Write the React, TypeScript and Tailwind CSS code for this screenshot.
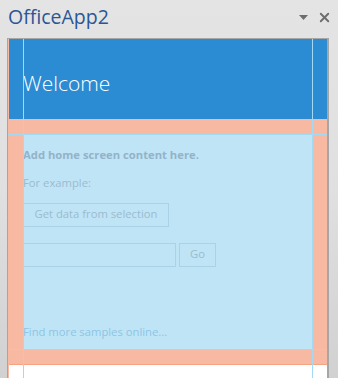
import { X } from "lucide-react";

// Office task pane, with the dev-tools box-model overlay drawn on top.
export default function App() {
  const guide = "absolute bg-[#a3d9f2]";
  return (
    <div className="relative h-[378px] w-[338px] overflow-hidden bg-gradient-to-b from-[#e4e4e4] via-[#e0e0e0] to-[#d1d1d1] font-['Open_Sans',sans-serif]">
      <div className="flex h-[38px] items-start justify-between pl-[8px] pr-[6px] pt-[3px]">
        <div className="text-[19.5px] leading-[28px] text-[#2b5597]">OfficeApp2</div>
        <div className="flex items-center gap-[9px] pt-[7px]">
          <svg width="9" height="5" viewBox="0 0 9 5">
            <path d="M0 0h9L4.5 5z" fill="#6d6d6d" />
          </svg>
          <X size={15} strokeWidth={3} className="text-[#6d6d6d]" />
        </div>
      </div>

      <div className="relative ml-[7px] h-[340px] w-[322px] border-l border-r-2 border-t border-[#a6a6a6] bg-[#f8b9a2] pl-px">
        <div className="flex h-[80px] items-center bg-[#2b8bd3] pl-[14px] pt-[10px]">
          <h1 className="text-[21px] font-light text-white">Welcome</h1>
        </div>

        <div className="ml-[14px] mt-[15px] flex h-[216px] w-[290px] flex-col bg-[#bfe4f6] pt-[13px] text-[11.25px] text-[#9bbbcf]">
          <div className="font-bold text-[#93b3c8]">Add home screen content here.</div>
          <div className="mt-[11px]">For example:</div>
          <button className="mt-[11px] h-[24px] w-[146px] border border-[#a9d2e6] text-[11.25px] text-[#9bbbcf]">
            Get data from selection
          </button>
          <div className="mt-[16px] flex gap-[3px]">
            <div className="h-[24px] w-[153px] border border-[#a9d2e6]" />
            <button className="h-[24px] w-[37px] border border-[#a9d2e6] text-[11.25px] text-[#9bbbcf]">Go</button>
          </div>
          <div className="mt-auto mb-[9px] text-[#8ec5e5]">Find more samples online...</div>
        </div>

        <div className="h-[15px] border-b border-[#f5a383]" />
        <div className="h-[20px] bg-white" />

        <div className={`${guide} left-[15px] top-0 h-full w-px`} />
        <div className={`${guide} left-[304px] top-0 h-full w-px`} />
        <div className={`${guide} left-0 top-[95px] h-px w-[319px]`} />
        <div className={`${guide} left-0 top-[310px] h-px w-[319px]`} />
      </div>
    </div>
  );
}
